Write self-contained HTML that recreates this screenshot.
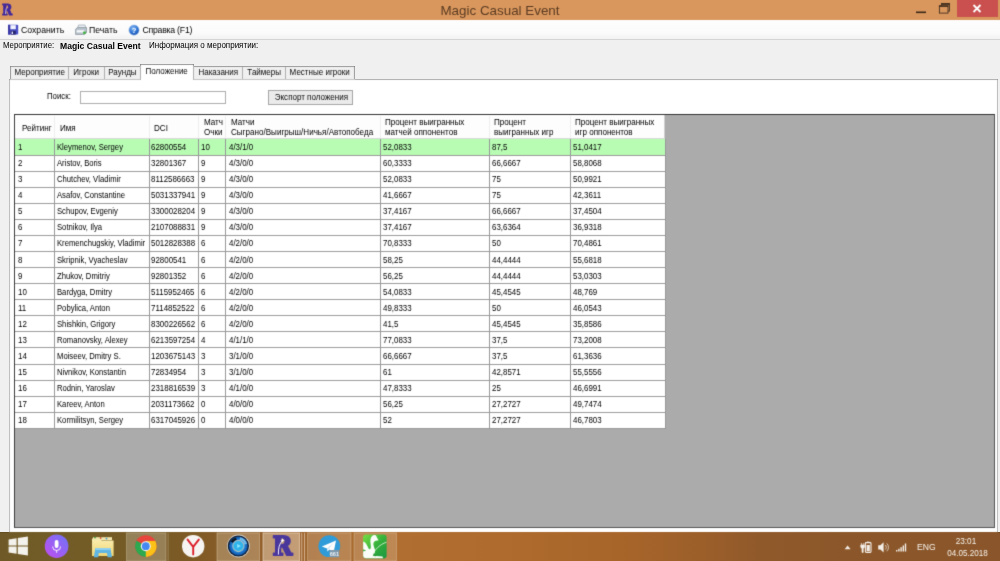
<!DOCTYPE html>
<html lang="ru">
<head>
<meta charset="utf-8">
<title>Magic Casual Event</title>
<style>
html,body{margin:0;padding:0}
body{filter:url(#soft);width:1000px;height:561px;overflow:hidden;position:relative;background:#f0f0f0;font-family:"Liberation Sans",sans-serif;font-size:8px;color:#000}
.abs,body>div,body>span{position:absolute}
#title{left:0;top:0;width:1000px;height:19.7px;background:#d9975d}
#title .t{position:absolute;left:0;width:1000px;top:1px;text-align:center;font-size:13.4px;line-height:20px;color:#5b3b22}
#close{position:absolute;left:957px;top:0;width:41px;height:17px;background:#c9504e}
#toolbar{left:0;top:20px;width:1000px;height:20px;background:linear-gradient(#fdfdfd,#fbfbfb 65%,#f1f1f1)}
.tb{position:absolute;top:20px;height:20px;line-height:20px;font-size:8.7px;color:#000;white-space:nowrap}
.lbl{position:absolute;white-space:nowrap;line-height:10px;font-size:8.1px;transform:scale(0.965,1.13);transform-origin:0 50%}
.tab{position:absolute;top:66px;height:13px;background:#f0f0f0;border:1px solid #b0b0b0;border-bottom:none;box-sizing:border-box;text-align:center;line-height:12.6px;white-space:nowrap;color:#0a0a0a;font-size:8.2px}
.tab.on{top:64px;height:16px;background:#fff;line-height:14px;z-index:3}
#panel{left:8.6px;top:79px;width:989.6px;height:453px;background:#fff;border:1.2px solid #d4d4d4;border-top-color:#c4c4c4;border-bottom:none;box-sizing:border-box}
#search{left:80px;top:90.6px;width:146.2px;height:13.6px;border:1px solid #adadad;background:#fff;box-sizing:border-box}
#btn{left:268.4px;top:90.2px;width:85px;height:15.2px;border:1px solid #a6a6a6;background:#ebebeb;box-sizing:border-box;text-align:center;line-height:13.4px;color:#0a0a0a;font-size:8.2px}
#grid{left:14px;top:114px;width:981px;height:414px;background:#ababab;border:1.2px solid #555;border-top-color:#333;border-left-color:#3c3c3c;box-sizing:border-box;overflow:hidden}
#tbl{position:absolute;left:0;top:0;width:650px;height:314px;background:#fff}
#hdr{position:absolute;left:0;top:0;width:650.4px;height:24px;background:#fdfdfd;border-bottom:1px solid #d8d8d8;border-right:1px solid #d0d0d0;box-sizing:border-box}
#hdr span{position:absolute;white-space:nowrap;line-height:9.2px;color:#000;font-size:8.3px;transform:scale(0.972,1.1);transform-origin:0 50%}
.row{position:absolute;left:0;width:650px;height:16.06px}
.hl{position:absolute;left:0;width:650px;height:1px;background:#9c9c9c}
.row span{position:absolute;top:0.1px;line-height:16px;white-space:nowrap;font-size:8.3px;color:#000;transform:scale(0.955,1.13);transform-origin:0 50%}
.row.sel{background:#b8fcb4;height:16.4px}
.vl{position:absolute;top:24px;width:1px;height:290px;background:#989898}
.hv{position:absolute;top:1px;width:1px;height:22px;background:#efefef}
#taskbar{left:0;top:532px;width:1000px;height:29px;background:linear-gradient(90deg,#6f5a27 0%,#735c26 8%,#765a26 14%,#7d5a25 19%,#8f5c28 25%,#a4662c 33%,#b06e30 40%,#ad6a2c 52%,#a8652a 62%,#9c5f2a 70%,#90592a 76%,#8b572a 85%,#8a552a 100%)}
.tray{position:absolute;color:#f7f2ea;font-size:8.6px;line-height:10px;white-space:nowrap}
.tab span,#btn span{display:inline-block;transform:scale(0.98,1.12);transform-origin:50% 50%}
.row span.nm{transform:scale(0.925,1.13)}
</style>
</head>
<body>
<svg width="0" height="0" style="position:absolute"><defs><filter id="soft" x="0" y="0" width="100%" height="100%" color-interpolation-filters="sRGB"><feConvolveMatrix order="3" kernelMatrix="0.0144 0.0912 0.0144 0.0912 0.5776 0.0912 0.0144 0.0912 0.0144" divisor="1" edgeMode="duplicate" preserveAlpha="true"/></filter></defs></svg>
<div id="title"><svg style="position:absolute;left:0;top:0" width="16" height="20"><text x="2.1" y="14.9" font-family="DejaVu Serif,serif" font-weight="bold" font-size="14" fill="#42289a" stroke="#42289a" stroke-width="1" stroke-linejoin="round" transform="translate(2.1 0) scale(0.88 1) translate(-2.1 0)">R</text><path d="M5.6 14 C5.6 11 5.9 9 6.9 7.4" stroke="#c9c4ee" stroke-width="0.9" fill="none"/></svg><span class="t">Magic Casual Event</span>
<svg style="position:absolute;left:912px;top:0" width="48" height="20"><rect x="4" y="11.5" width="10" height="1.6" fill="#3a2718"/><rect x="29.6" y="3.5" width="7.8" height="7.6" fill="none" stroke="#45301f" stroke-width="0.9"/><rect x="29.1" y="3" width="8.8" height="1.9" fill="#45301f"/><rect x="27.4" y="5.9" width="8.6" height="7.2" fill="#d9975d" stroke="#45301f" stroke-width="0.9"/><rect x="26.9" y="5.4" width="9.6" height="1.5" fill="#45301f"/></svg>
<div id="close"><svg width="41" height="17"><path d="M16.5 5 L23.5 12 M23.5 5 L16.5 12" stroke="#fff" stroke-width="1.8"/></svg></div>
</div>
<div id="toolbar"></div>
<svg class="abs" style="left:7px;top:24px" width="12" height="12" viewBox="0 0 12 12">
<rect x="1" y="0.8" width="10.2" height="9.8" rx="0.8" fill="#4a4fc4"/><rect x="1" y="0.8" width="2.2" height="9.8" fill="#3b3aa8"/>
<rect x="3.4" y="1.2" width="5.4" height="4" fill="#f2f4ff"/><rect x="3.8" y="6.8" width="5" height="3.8" fill="#26246e"/><rect x="4.6" y="7.6" width="1.4" height="2.4" fill="#e8e8ff"/></svg>
<svg class="abs" style="left:75px;top:24px" width="13" height="12" viewBox="0 0 13 12">
<path d="M3.5 1 L10 1 L11 4.5 L2.5 4.5 Z" fill="#e9eef2" stroke="#8a97a3" stroke-width="0.6"/>
<path d="M0.6 5.2 L2.6 3.6 L11.6 3.6 L11.6 8.6 L9.6 10.4 L0.6 10.4 Z" fill="#b9c3cc" stroke="#6f7c88" stroke-width="0.6"/>
<rect x="1.6" y="6.2" width="7.6" height="2.2" fill="#f6f8fa"/><rect x="8.2" y="7.6" width="2.6" height="2.2" fill="#35b135"/></svg>
<svg class="abs" style="left:128px;top:24px" width="12" height="12" viewBox="0 0 12 12">
<defs><radialGradient id="hg" cx="0.4" cy="0.3" r="0.8"><stop offset="0" stop-color="#7db4f2"/><stop offset="0.6" stop-color="#2b6fd0"/><stop offset="1" stop-color="#184a9c"/></radialGradient></defs>
<circle cx="6" cy="6.1" r="5.1" fill="url(#hg)" stroke="#9fc0ea" stroke-width="0.6"/>
<text x="6" y="8.9" text-anchor="middle" font-family="Liberation Sans,sans-serif" font-weight="bold" font-size="7.6" fill="#fff">?</text></svg>

<span class="tb" style="left:21px">Сохранить</span>
<span class="tb" style="left:89px">Печать</span>
<span class="tb" style="left:142.4px;letter-spacing:-0.22px">Справка (F1)</span>
<span class="lbl" style="left:3px;top:41px">Мероприятие:</span>
<span class="lbl" style="left:60px;top:41px;font-weight:bold;font-size:8.6px;color:#000;transform:scale(1.0,1.1)">Magic Casual Event</span>
<span class="lbl" style="left:149px;top:41px;transform:scale(0.99,1.13)">Информация о мероприятии:</span>
<div id="panel"></div>
<div class="tab" style="left:10px;width:59px"><span>Мероприятие</span></div>
<div class="tab" style="left:68px;width:37px"><span>Игроки</span></div>
<div class="tab" style="left:104px;width:37px"><span>Раунды</span></div>
<div class="tab on" style="left:140px;width:54px"><span>Положение</span></div>
<div class="tab" style="left:193px;width:50px"><span>Наказания</span></div>
<div class="tab" style="left:242px;width:44px"><span>Таймеры</span></div>
<div class="tab" style="left:285px;width:70px"><span>Местные игроки</span></div>
<span class="lbl" style="left:47px;top:92.4px">Поиск:</span>
<div id="search"></div>
<div id="btn"><span>Экспорт положения</span></div>
<div id="grid"><div id="tbl">
<div id="hdr">
<span style="left:7px;top:8.8px">Рейтинг</span>
<span style="left:45.4px;top:8.8px">Имя</span>
<span style="left:139px;top:8.8px">DCI</span>
<span style="left:189px;top:3px">Матч<br>Очки</span>
<span style="left:216px;top:3px">Матчи<br>Сыграно/Выигрыш/Ничья/Автопобеда</span>
<span style="left:370px;top:3px">Процент выигранных<br>матчей оппонентов</span>
<span style="left:479px;top:3px">Процент<br>выигранных игр</span>
<span style="left:560px;top:3px">Процент выигранных<br>игр оппонентов</span>
<i class="hv" style="left:39.2px"></i><i class="hv" style="left:134.2px"></i><i class="hv" style="left:183.2px"></i><i class="hv" style="left:210.4px"></i><i class="hv" style="left:364.6px"></i><i class="hv" style="left:474.0px"></i><i class="hv" style="left:555.0px"></i></div>
<div class="row sel" style="top:24.00px"><span style="left:3.3px">1</span><span class="nm" style="left:42.3px">Kleymenov, Sergey</span><span style="left:136.0px">62800554</span><span style="left:186.0px">10</span><span style="left:214.0px">4/3/1/0</span><span style="left:368.2px">52,0833</span><span style="left:477.4px">87,5</span><span style="left:558.4px">51,0417</span></div>
<div class="row" style="top:40.06px"><span style="left:3.3px">2</span><span class="nm" style="left:42.3px">Aristov, Boris</span><span style="left:136.0px">32801367</span><span style="left:186.0px">9</span><span style="left:214.0px">4/3/0/0</span><span style="left:368.2px">60,3333</span><span style="left:477.4px">66,6667</span><span style="left:558.4px">58,8068</span></div>
<div class="row" style="top:56.12px"><span style="left:3.3px">3</span><span class="nm" style="left:42.3px">Chutchev, Vladimir</span><span style="left:136.0px">8112586663</span><span style="left:186.0px">9</span><span style="left:214.0px">4/3/0/0</span><span style="left:368.2px">52,0833</span><span style="left:477.4px">75</span><span style="left:558.4px">50,9921</span></div>
<div class="row" style="top:72.18px"><span style="left:3.3px">4</span><span class="nm" style="left:42.3px">Asafov, Constantine</span><span style="left:136.0px">5031337941</span><span style="left:186.0px">9</span><span style="left:214.0px">4/3/0/0</span><span style="left:368.2px">41,6667</span><span style="left:477.4px">75</span><span style="left:558.4px">42,3611</span></div>
<div class="row" style="top:88.24px"><span style="left:3.3px">5</span><span class="nm" style="left:42.3px">Schupov, Evgeniy</span><span style="left:136.0px">3300028204</span><span style="left:186.0px">9</span><span style="left:214.0px">4/3/0/0</span><span style="left:368.2px">37,4167</span><span style="left:477.4px">66,6667</span><span style="left:558.4px">37,4504</span></div>
<div class="row" style="top:104.30px"><span style="left:3.3px">6</span><span class="nm" style="left:42.3px">Sotnikov, Ilya</span><span style="left:136.0px">2107088831</span><span style="left:186.0px">9</span><span style="left:214.0px">4/3/0/0</span><span style="left:368.2px">37,4167</span><span style="left:477.4px">63,6364</span><span style="left:558.4px">36,9318</span></div>
<div class="row" style="top:120.36px"><span style="left:3.3px">7</span><span class="nm" style="left:42.3px">Kremenchugskiy, Vladimir</span><span style="left:136.0px">5012828388</span><span style="left:186.0px">6</span><span style="left:214.0px">4/2/0/0</span><span style="left:368.2px">70,8333</span><span style="left:477.4px">50</span><span style="left:558.4px">70,4861</span></div>
<div class="row" style="top:136.42px"><span style="left:3.3px">8</span><span class="nm" style="left:42.3px">Skripnik, Vyacheslav</span><span style="left:136.0px">92800541</span><span style="left:186.0px">6</span><span style="left:214.0px">4/2/0/0</span><span style="left:368.2px">58,25</span><span style="left:477.4px">44,4444</span><span style="left:558.4px">55,6818</span></div>
<div class="row" style="top:152.48px"><span style="left:3.3px">9</span><span class="nm" style="left:42.3px">Zhukov, Dmitriy</span><span style="left:136.0px">92801352</span><span style="left:186.0px">6</span><span style="left:214.0px">4/2/0/0</span><span style="left:368.2px">56,25</span><span style="left:477.4px">44,4444</span><span style="left:558.4px">53,0303</span></div>
<div class="row" style="top:168.54px"><span style="left:3.3px">10</span><span class="nm" style="left:42.3px">Bardyga, Dmitry</span><span style="left:136.0px">5115952465</span><span style="left:186.0px">6</span><span style="left:214.0px">4/2/0/0</span><span style="left:368.2px">54,0833</span><span style="left:477.4px">45,4545</span><span style="left:558.4px">48,769</span></div>
<div class="row" style="top:184.60px"><span style="left:3.3px">11</span><span class="nm" style="left:42.3px">Pobylica, Anton</span><span style="left:136.0px">7114852522</span><span style="left:186.0px">6</span><span style="left:214.0px">4/2/0/0</span><span style="left:368.2px">49,8333</span><span style="left:477.4px">50</span><span style="left:558.4px">46,0543</span></div>
<div class="row" style="top:200.66px"><span style="left:3.3px">12</span><span class="nm" style="left:42.3px">Shishkin, Grigory</span><span style="left:136.0px">8300226562</span><span style="left:186.0px">6</span><span style="left:214.0px">4/2/0/0</span><span style="left:368.2px">41,5</span><span style="left:477.4px">45,4545</span><span style="left:558.4px">35,8586</span></div>
<div class="row" style="top:216.72px"><span style="left:3.3px">13</span><span class="nm" style="left:42.3px">Romanovsky, Alexey</span><span style="left:136.0px">6213597254</span><span style="left:186.0px">4</span><span style="left:214.0px">4/1/1/0</span><span style="left:368.2px">77,0833</span><span style="left:477.4px">37,5</span><span style="left:558.4px">73,2008</span></div>
<div class="row" style="top:232.78px"><span style="left:3.3px">14</span><span class="nm" style="left:42.3px">Moiseev, Dmitry S.</span><span style="left:136.0px">1203675143</span><span style="left:186.0px">3</span><span style="left:214.0px">3/1/0/0</span><span style="left:368.2px">66,6667</span><span style="left:477.4px">37,5</span><span style="left:558.4px">61,3636</span></div>
<div class="row" style="top:248.84px"><span style="left:3.3px">15</span><span class="nm" style="left:42.3px">Nivnikov, Konstantin</span><span style="left:136.0px">72834954</span><span style="left:186.0px">3</span><span style="left:214.0px">3/1/0/0</span><span style="left:368.2px">61</span><span style="left:477.4px">42,8571</span><span style="left:558.4px">55,5556</span></div>
<div class="row" style="top:264.90px"><span style="left:3.3px">16</span><span class="nm" style="left:42.3px">Rodnin, Yaroslav</span><span style="left:136.0px">2318816539</span><span style="left:186.0px">3</span><span style="left:214.0px">4/1/0/0</span><span style="left:368.2px">47,8333</span><span style="left:477.4px">25</span><span style="left:558.4px">46,6991</span></div>
<div class="row" style="top:280.96px"><span style="left:3.3px">17</span><span class="nm" style="left:42.3px">Kareev, Anton</span><span style="left:136.0px">2031173662</span><span style="left:186.0px">0</span><span style="left:214.0px">4/0/0/0</span><span style="left:368.2px">56,25</span><span style="left:477.4px">27,2727</span><span style="left:558.4px">49,7474</span></div>
<div class="row" style="top:297.02px"><span style="left:3.3px">18</span><span class="nm" style="left:42.3px">Kormilitsyn, Sergey</span><span style="left:136.0px">6317045926</span><span style="left:186.0px">0</span><span style="left:214.0px">4/0/0/0</span><span style="left:368.2px">52</span><span style="left:477.4px">27,2727</span><span style="left:558.4px">46,7803</span></div>
<i class="hl" style="top:40px"></i><i class="hl" style="top:56px"></i><i class="hl" style="top:72px"></i><i class="hl" style="top:88px"></i><i class="hl" style="top:104px"></i><i class="hl" style="top:120px"></i><i class="hl" style="top:136px"></i><i class="hl" style="top:152px"></i><i class="hl" style="top:168px"></i><i class="hl" style="top:184px"></i><i class="hl" style="top:200px"></i><i class="hl" style="top:216px"></i><i class="hl" style="top:232px"></i><i class="hl" style="top:249px"></i><i class="hl" style="top:265px"></i><i class="hl" style="top:281px"></i><i class="hl" style="top:297px"></i><i class="hl" style="top:313px"></i>
<i class="vl" style="left:39.2px"></i><i class="vl" style="left:134.2px"></i><i class="vl" style="left:183.2px"></i><i class="vl" style="left:210.4px"></i><i class="vl" style="left:364.6px"></i><i class="vl" style="left:474.0px"></i><i class="vl" style="left:555.0px"></i><i class="vl" style="left:649.5px"></i>
</div></div>
<div id="taskbar">
<svg width="1000" height="29" viewBox="0 532 1000 29" style="position:absolute;left:0;top:0">
<defs>
<linearGradient id="mic" x1="0" y1="1" x2="1" y2="0"><stop offset="0" stop-color="#c24df0"/><stop offset="1" stop-color="#6d74f7"/></linearGradient>
<linearGradient id="grn" x1="0" y1="0" x2="1" y2="1"><stop offset="0" stop-color="#78de44"/><stop offset="0.5" stop-color="#36b13c"/><stop offset="1" stop-color="#189640"/></linearGradient>
<radialGradient id="mp" cx="0.5" cy="0.5" r="0.5"><stop offset="0" stop-color="#2fa0e4"/><stop offset="0.6" stop-color="#1f86d8"/><stop offset="0.85" stop-color="#1668c0"/><stop offset="1" stop-color="#0f4a98"/></radialGradient>
<linearGradient id="fold" x1="0" y1="0" x2="0" y2="1"><stop offset="0" stop-color="#fbeeb0"/><stop offset="1" stop-color="#f0d676"/></linearGradient>
</defs>
<!-- button backgrounds -->
<rect x="126.5" y="533" width="39.5" height="28" fill="#c8c0a8" fill-opacity="0.38" stroke="#d8d0b8" stroke-opacity="0.45" stroke-width="0.8"/>
<rect x="167.6" y="533" width="1" height="28" fill="#d8d0b8" fill-opacity="0.35"/>
<rect x="217" y="533" width="42.5" height="28" fill="#e0d0b4" fill-opacity="0.34" stroke="#ecdcc0" stroke-opacity="0.5" stroke-width="0.8"/>
<rect x="263" y="533" width="36.6" height="28" fill="#ecd8c0" fill-opacity="0.5" stroke="#f0e0cc" stroke-opacity="0.7" stroke-width="0.9"/>
<rect x="301.2" y="533" width="1.1" height="28" fill="#f0e0cc" fill-opacity="0.6"/><rect x="304" y="533" width="1.1" height="28" fill="#f0e0cc" fill-opacity="0.6"/>
<rect x="307.6" y="533" width="43.4" height="28" fill="#e0c8a8" fill-opacity="0.3" stroke="#e8d4b8" stroke-opacity="0.45" stroke-width="0.8"/>
<rect x="354" y="533" width="42.4" height="28" fill="#e0c8a8" fill-opacity="0.3" stroke="#e8d4b8" stroke-opacity="0.45" stroke-width="0.8"/>
<!-- windows logo -->
<path d="M8.6 539.4 L16.6 538.2 L16.6 545.4 L8.6 545.4 Z M17.8 538 L27.9 536.5 L27.9 545.4 L17.8 545.4 Z M8.6 546.6 L16.6 546.6 L16.6 553.8 L8.6 552.6 Z M17.8 546.6 L27.9 546.6 L27.9 555.5 L17.8 554 Z" fill="#f4f2ec"/>
<!-- mic -->
<circle cx="56.6" cy="546.2" r="11.8" fill="url(#mic)"/>
<rect x="54.7" y="540" width="3.8" height="8" rx="1.9" fill="#fff"/>
<path d="M52.6 546.5 A4 4 0 0 0 60.6 546.5" fill="none" stroke="#fff" stroke-width="0.9"/><rect x="56.2" y="550.4" width="0.9" height="2.4" fill="#fff"/>
<!-- folder -->
<path d="M92 538.6 L100 538.6 L101.5 540.4 L113.6 540.4 L113.6 556 L92 556 Z" fill="url(#fold)"/>
<rect x="93" y="537.2" width="19" height="3" fill="#f3e7b0"/>
<circle cx="95" cy="537.6" r="0.9" fill="#3aa03a"/><circle cx="100.6" cy="538" r="0.9" fill="#d05030"/><circle cx="106.5" cy="538.6" r="0.9" fill="#3a9ad0"/>
<path d="M95.4 548 L110.4 548 L112 557.2 L107.6 557.2 L107 553 L98.8 553 L98.2 557.2 L93.8 557.2 Z" fill="#5fb6e4"/>
<path d="M95.4 548 L110.4 548 L110.8 550 L95 550 Z" fill="#8fd0f0"/>
<!-- chrome -->
<circle cx="145.8" cy="546.2" r="10.8" fill="#e8453c"/>
<path d="M145.8 546.2 L136.45 540.8 A10.8 10.8 0 0 0 145.8 557 L151.2 549.3 Z" fill="#2da94f"/>
<path d="M145.8 546.2 L145.8 557 A10.8 10.8 0 0 0 155.15 540.8 L145.8 540.8 Z" fill="#fbc116"/>
<path d="M136.45 540.8 A10.8 10.8 0 0 1 155.15 540.8 L145.8 540.8 Z" fill="#e8453c"/>
<path d="M136.45 540.8 L141.2 549 L145.8 546.2 Z" fill="#2da94f"/>
<circle cx="145.8" cy="546.2" r="5" fill="#f4f4f4"/><circle cx="145.8" cy="546.2" r="3.9" fill="#4688f1"/>
<!-- yandex -->
<circle cx="193.2" cy="546.2" r="11.2" fill="#f6f4f2"/>
<path d="M187.6 539.6 L193.2 546.8 L198.8 539.6 M193.2 546.4 L193.2 554.4" fill="none" stroke="#dc1e2a" stroke-width="1.9" stroke-linecap="round" stroke-linejoin="round"/>
<!-- media player -->
<circle cx="238.4" cy="546" r="11.4" fill="#d6d4cc"/>
<circle cx="238.4" cy="546" r="10.6" fill="#0e1a2c"/>
<circle cx="238.4" cy="546" r="9.4" fill="url(#mp)"/>
<path d="M230.6 541.4 A9 9 0 0 1 236 537.4 L236.8 540 A6.4 6.4 0 0 0 233 543 Z" fill="#0a1420"/>
<path d="M240 537.2 A9 9 0 0 1 247.2 544 L244.4 544.6 A6.2 6.2 0 0 0 239.6 540 Z" fill="#7cc8f0" fill-opacity="0.85"/>
<circle cx="238.4" cy="546" r="5.6" fill="#2fb4ea" stroke="#a9bcc6" stroke-width="1.1"/>
<path d="M237.2 544 L240.8 546 L237.2 548 Z" fill="#8fe6ff"/>
<!-- R -->
<text x="272.6" y="555.2" font-family="DejaVu Serif,serif" font-weight="bold" font-size="26.6" fill="#4a379c" stroke="#4a379c" stroke-width="2" stroke-linejoin="round" transform="translate(272.6 0) scale(0.9 1) translate(-272.6 0)">R</text>
<path d="M278.4 554.6 C278.2 548 279.4 543.6 282.6 540.4" fill="none" stroke="#f2f0ff" stroke-width="1"/>
<path d="M282.6 538.2 L283.2 539.8 L284.8 540.4 L283.2 541 L282.6 542.6 L282 541 L280.4 540.4 L282 539.8 Z" fill="#fff"/>
<!-- telegram -->
<circle cx="329.3" cy="546.2" r="10.9" fill="#2f9bd8"/>
<path d="M321.8 546.4 L336 540.4 L333.6 552.6 L329.4 549.6 L327.4 551.6 L327 548.4 Z" fill="#fff"/>
<path d="M327 548.4 L334 542.4 L328.2 549.2 L327.4 551.6 Z" fill="#c6dcec"/>
<rect x="329.6" y="550" width="9.6" height="7.2" rx="1" fill="#7e98ac"/>
<text x="334.4" y="556" text-anchor="middle" font-family="Liberation Sans,sans-serif" font-weight="bold" font-size="5.6" fill="#e8eef2">661</text>
<!-- green app -->
<rect x="363" y="534.6" width="23.6" height="23.8" rx="3.2" fill="url(#grn)"/>
<path d="M363.2 541.6 C365.5 542 367 545 368.6 548.6 C369.4 550 370.6 549.4 370.8 547.6 C371 545 370.2 542.6 370.4 540 C370.6 537.4 372 535.4 374.2 535 C375.6 534.8 376.6 535.6 376.6 537 L378.6 540.2 L375.8 540.8 C374 541.4 373.2 542.6 373.4 544.6 C373.8 547.6 375.6 549.6 375 552 C374.6 553.6 373.4 554.6 373.2 555.8 L382.6 556.4 L383 558.3 L366 558.3 C364.2 558.3 363.1 557.2 363.1 555.6 Z" fill="#fbfdf8"/>
<path d="M363.1 549.2 L366.2 550.4 L363.1 551.6 Z" fill="#3aa83a"/>
<path d="M372.4 556.4 C374 549.6 380 544.4 386.4 542.2" fill="none" stroke="#e6f7de" stroke-width="0.8"/>
<path d="M373.8 553.4 L376.6 555 L375.4 556.6 L373 555.6 Z" fill="#2c9a3c"/>
<!-- tray -->
<path d="M844.6 549.2 L847.6 545.6 L850.6 549.2 Z" fill="#f0e8e0"/>
<rect x="865.4" y="542.6" width="5.6" height="9.8" rx="0.8" fill="none" stroke="#f4efe8" stroke-width="1.1"/><rect x="867" y="541.6" width="2.4" height="1.2" fill="#f4efe8"/><rect x="866.6" y="545" width="3.2" height="6.2" fill="#f4efe8"/>
<path d="M861.4 543 L861.4 545 M863.8 543 L863.8 545 M860.8 545 L864.4 545 L864.4 547.4 L863.2 548.4 L863.2 552.4 L862 552.4 L862 548.4 L860.8 547.4 Z" fill="#f4efe8" stroke="#f4efe8" stroke-width="0.7"/>
<path d="M878.2 545.2 L880.4 545.2 L883.6 542.2 L883.6 552.4 L880.4 549.4 L878.2 549.4 Z" fill="#f4efe8"/>
<path d="M885.2 545 A3 3 0 0 1 885.2 549.6 M886.8 543.4 A5.4 5.4 0 0 1 886.8 551.2" fill="none" stroke="#e8dfd4" stroke-width="0.8"/>
<path d="M896 550 h1.4 v1.4 h-1.4z M898.2 548.8 h1.4 v2.6 h-1.4z M900.4 547.2 h1.4 v4.2 h-1.4z M902.6 545.4 h1.4 v6 h-1.4z M904.8 543.6 h1.4 v7.8 h-1.4z" fill="#f4efe8"/>
</svg>
<span class="tray" style="left:917px;top:10px">ENG</span>
<span class="tray" style="left:946.4px;top:3.6px;width:40px;text-align:center;transform:scaleX(0.95)">23:01</span>
<span class="tray" style="left:946.4px;top:16px;width:40px;text-align:center;transform:scaleX(0.94)">04.05.2018</span>
</div>
</body>
</html>
